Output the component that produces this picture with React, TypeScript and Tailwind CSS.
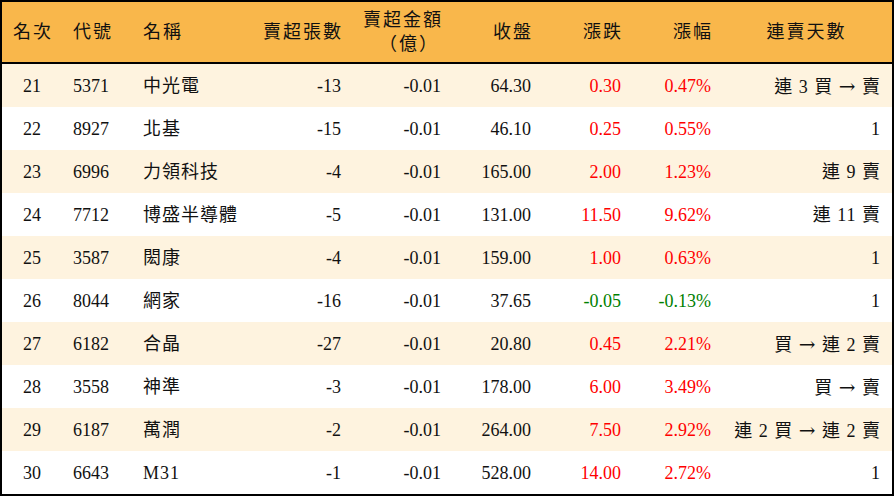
import React from "react";

type Row = {
  rank: string;
  code: string;
  name: string;
  lots: string;
  amt: string;
  close: string;
  chg: string;
  pct: string;
  days: string;
};

const rows: Row[] = [
  { rank: "21", code: "5371", name: "中光電", lots: "-13", amt: "-0.01", close: "64.30", chg: "0.30", pct: "0.47%", days: "連 3 買 → 賣" },
  { rank: "22", code: "8927", name: "北基", lots: "-15", amt: "-0.01", close: "46.10", chg: "0.25", pct: "0.55%", days: "1" },
  { rank: "23", code: "6996", name: "力領科技", lots: "-4", amt: "-0.01", close: "165.00", chg: "2.00", pct: "1.23%", days: "連 9 賣" },
  { rank: "24", code: "7712", name: "博盛半導體", lots: "-5", amt: "-0.01", close: "131.00", chg: "11.50", pct: "9.62%", days: "連 11 賣" },
  { rank: "25", code: "3587", name: "閎康", lots: "-4", amt: "-0.01", close: "159.00", chg: "1.00", pct: "0.63%", days: "1" },
  { rank: "26", code: "8044", name: "網家", lots: "-16", amt: "-0.01", close: "37.65", chg: "-0.05", pct: "-0.13%", days: "1" },
  { rank: "27", code: "6182", name: "合晶", lots: "-27", amt: "-0.01", close: "20.80", chg: "0.45", pct: "2.21%", days: "買 → 連 2 賣" },
  { rank: "28", code: "3558", name: "神準", lots: "-3", amt: "-0.01", close: "178.00", chg: "6.00", pct: "3.49%", days: "買 → 賣" },
  { rank: "29", code: "6187", name: "萬潤", lots: "-2", amt: "-0.01", close: "264.00", chg: "7.50", pct: "2.92%", days: "連 2 買 → 連 2 賣" },
  { rank: "30", code: "6643", name: "M31", lots: "-1", amt: "-0.01", close: "528.00", chg: "14.00", pct: "2.72%", days: "1" },
];

const grid = "grid grid-cols-[60px_70px_118px_101px_100px_90px_90px_90px_171px]";

function Days({ text }: { text: string }) {
  const parts = text.split("→");
  return (
    <>
      {parts.map((p, i) => (
        <React.Fragment key={i}>
          {i > 0 && <span className="font-['DejaVu_Serif'] text-[20px]">→</span>}
          {p}
        </React.Fragment>
      ))}
    </>
  );
}

export default function App() {
  return (
    <div
      className="w-[894px] h-[496px] bg-white border-2 border-black text-[18px] text-[#111] leading-none"
      style={{ fontFamily: '"Liberation Serif", "Noto Sans CJK TC", serif' }}
    >
      <div className={`${grid} h-[60px] bg-[#f9b74b] items-center tracking-[2px]`}>
        <div className="text-center pl-[2px]">名次</div>
        <div className="pl-[11px]">代號</div>
        <div className="pl-[11px]">名稱</div>
        <div className="text-right pr-[8px]">賣超張數</div>
        <div className="text-right pr-[8px] flex flex-col items-end gap-[6px]">
          <span>賣超金額</span>
          <span className="pr-[4px]">（億）</span>
        </div>
        <div className="text-right pr-[8px]">收盤</div>
        <div className="text-right pr-[8px]">漲跌</div>
        <div className="text-right pr-[8px]">漲幅</div>
        <div className="text-center">連賣天數</div>
      </div>
      <div className="h-[2px] bg-black" />
      {rows.map((r, i) => {
        const neg = r.chg.startsWith("-");
        const color = neg ? "text-[#008000]" : "text-[#ff0000]";
        return (
          <div
            key={r.rank}
            className={`${grid} h-[43px] items-center ${i % 2 === 0 ? "bg-[#fef3df]" : "bg-white"}`}
          >
            <div className="text-center">{r.rank}</div>
            <div className="pl-[11px]">{r.code}</div>
            <div className="pl-[11px] tracking-[1px]">{r.name}</div>
            <div className="text-right pr-[10px]">{r.lots}</div>
            <div className="text-right pr-[10px]">{r.amt}</div>
            <div className="text-right pr-[10px]">{r.close}</div>
            <div className={`text-right pr-[10px] ${color}`}>{r.chg}</div>
            <div className={`text-right pr-[10px] ${color}`}>{r.pct}</div>
            <div className="text-right pr-[11px] whitespace-pre tracking-[1px]">
              <Days text={r.days} />
            </div>
          </div>
        );
      })}
    </div>
  );
}
